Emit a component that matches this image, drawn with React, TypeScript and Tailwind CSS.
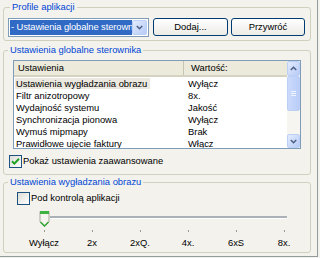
import React from "react";

const rows = [
  ["Ustawienia wygładzania obrazu", "Wyłącz"],
  ["Filtr anizotropowy", "8x."],
  ["Wydajność systemu", "Jakość"],
  ["Synchronizacja pionowa", "Wyłącz"],
  ["Wymuś mipmapy", "Brak"],
  ["Prawidłowe ujęcie faktury", "Włącz"],
];

const ticks = ["Wyłącz", "2x", "2xQ.", "4x.", "6xS", "8x."];

function Chevron({ up = false }: { up?: boolean }) {
  return (
    <svg width="7" height="5" viewBox="0 0 7 5">
      <path
        d={up ? "M0.8 4 L3.5 1.3 L6.2 4" : "M0.8 1 L3.5 3.7 L6.2 1"}
        stroke="#4d6185"
        strokeWidth="1.6"
        fill="none"
      />
    </svg>
  );
}

function ArrowButton({ up = false, className = "" }: { up?: boolean; className?: string }) {
  return (
    <div
      className={
        "flex items-center justify-center rounded-[2px] border border-[#bccff5] bg-linear-to-br from-[#e3ebfd] to-[#b7cbf7] " +
        className
      }
    >
      <Chevron up={up} />
    </div>
  );
}

function CheckBox({ checked }: { checked: boolean }) {
  return (
    <span className="flex h-[13px] w-[13px] shrink-0 items-center justify-center border border-[#1c5180] bg-linear-to-br from-[#dcdcd7] to-white">
      {checked && (
        <svg width="9" height="9" viewBox="0 0 9 9">
          <path d="M1 4.2 L3.4 6.6 L8 1.8" stroke="#21a121" strokeWidth="2" fill="none" />
        </svg>
      )}
    </span>
  );
}

function Group({
  title,
  titleLeft,
  className = "",
  children,
}: {
  title: string;
  titleLeft: string;
  className?: string;
  children: React.ReactNode;
}) {
  return (
    <fieldset className={"mx-[3px] w-[308px] rounded-[3px] border border-[#d0d0bf] " + className}>
      <legend className={"px-[2px] leading-[12px] text-[#0046d5] " + titleLeft}>{title}</legend>
      {children}
    </fieldset>
  );
}

export default function App() {
  return (
    <div className="h-[258px] w-[320px] overflow-hidden bg-[#f3f2ec] font-['Liberation_Sans',Arial,sans-serif] text-[9.4px] text-black">
      <div className="h-[257px] w-[318px] border-r border-b border-[#919b9c] pt-[1px]">
        {/* profile */}
        <Group title="Profile aplikacji" titleLeft="ml-[6px]">
          <div className="flex pl-[4px] pt-[5px] pb-[3px]">
            <div className="flex h-[19px] w-[141px] border border-[#7f9db9] bg-white p-[1px]">
              <div className="flex flex-1 items-center overflow-hidden whitespace-nowrap bg-[#316ac5] pl-[1px] tracking-[-0.1px] text-white">
                - Ustawienia globalne sterown
              </div>
              <ArrowButton className="w-[15px]" />
            </div>
            <button className="ml-[4px] h-[18px] w-[75px] rounded-[3px] border border-[#003c74] bg-linear-to-b from-white to-[#ecebe6]">
              Dodaj...
            </button>
            <button className="ml-[3px] h-[18px] w-[74px] rounded-[3px] border border-[#003c74] bg-linear-to-b from-white to-[#ecebe6]">
              Przywróć
            </button>
          </div>
        </Group>

        {/* global settings */}
        <Group title="Ustawienia globalne sterownika" titleLeft="ml-[4px]" className="mt-[3px]">
          <div className="ml-[9px] mt-[4px] flex h-[89px] w-[288px] border border-[#7f9db9] bg-white">
            <div className="flex-1 overflow-hidden">
              <div className="flex h-[16px] border-b-2 border-[#d6d2c2] bg-[#ebeadb]">
                <div className="flex w-[170px] items-center border-r border-[#c7c5b2] pl-[4px]">Ustawienia</div>
                <div className="flex items-center pl-[7px]">Wartość:</div>
              </div>
              <div className="pt-[1px]">
                {rows.map(([name, value], i) => (
                  <div key={name} className="flex h-[12px] items-center whitespace-nowrap">
                    <div className="w-[174px] pl-[1px]">
                      <span className={"px-[1px] " + (i === 0 ? "bg-[#ebe9df] pr-[3px]" : "")}>{name}</span>
                    </div>
                    <div>{value}</div>
                  </div>
                ))}
              </div>
            </div>
            <div className="flex w-[13px] flex-col bg-[#f6f5f0]">
              <ArrowButton up className="h-[15px]" />
              <div className="flex h-[35px] flex-col items-center justify-center gap-[1px] rounded-[2px] border border-[#bccff5] bg-linear-to-r from-[#cbdafc] to-[#b9cdf7]">
                <div className="h-[1px] w-[5px] bg-[#eef3fe]" />
                <div className="h-[1px] w-[5px] bg-[#eef3fe]" />
                <div className="h-[1px] w-[5px] bg-[#eef3fe]" />
              </div>
              <div className="flex-1" />
              <ArrowButton className="h-[14px]" />
            </div>
          </div>
          <label className="ml-[5px] mt-[5px] mb-[6px] flex items-center gap-[1px]">
            <CheckBox checked />
            <span>Pokaż ustawienia zaawansowane</span>
          </label>
        </Group>

        {/* antialiasing */}
        <Group title="Ustawienia wygładzania obrazu" titleLeft="ml-[4px]" className="mt-[1px]">
          <label className="ml-[13px] mt-[3px] flex items-center gap-[1px]">
            <CheckBox checked={false} />
            <span>Pod kontrolą aplikacji</span>
          </label>
          <div className="ml-[35px] mt-[5px] flex items-start">
            <svg width="11" height="18" viewBox="0 0 11 18">
              <path d="M1 1.5 H10 V12 L5.5 16.5 L1 12 Z" fill="#f5f4ee" stroke="#a9a99d" />
              <rect x="1" y="1" width="9" height="3" fill="#3fb33f" />
              <path d="M1.5 12 L5.5 16 L9.5 12" stroke="#2ca52c" strokeWidth="1.4" fill="none" />
            </svg>
            <div className="mt-[6px] w-[237px]">
              <div className="h-[2px] bg-[#aab2b8]" />
              <div className="h-[1px] bg-white" />
            </div>
          </div>
          <div className="ml-[16px] mt-[2px] flex">
            {ticks.map((t) => (
              <div key={t} className="flex w-[48px] justify-center">
                <div className="h-[2px] w-[1px] bg-[#9a9a90]" />
              </div>
            ))}
          </div>
          <div className="ml-[16px] mt-[5px] mb-[3px] flex">
            {ticks.map((t) => (
              <div key={t} className="flex w-[48px] justify-center leading-[12px]">
                {t}
              </div>
            ))}
          </div>
        </Group>
      </div>
    </div>
  );
}
